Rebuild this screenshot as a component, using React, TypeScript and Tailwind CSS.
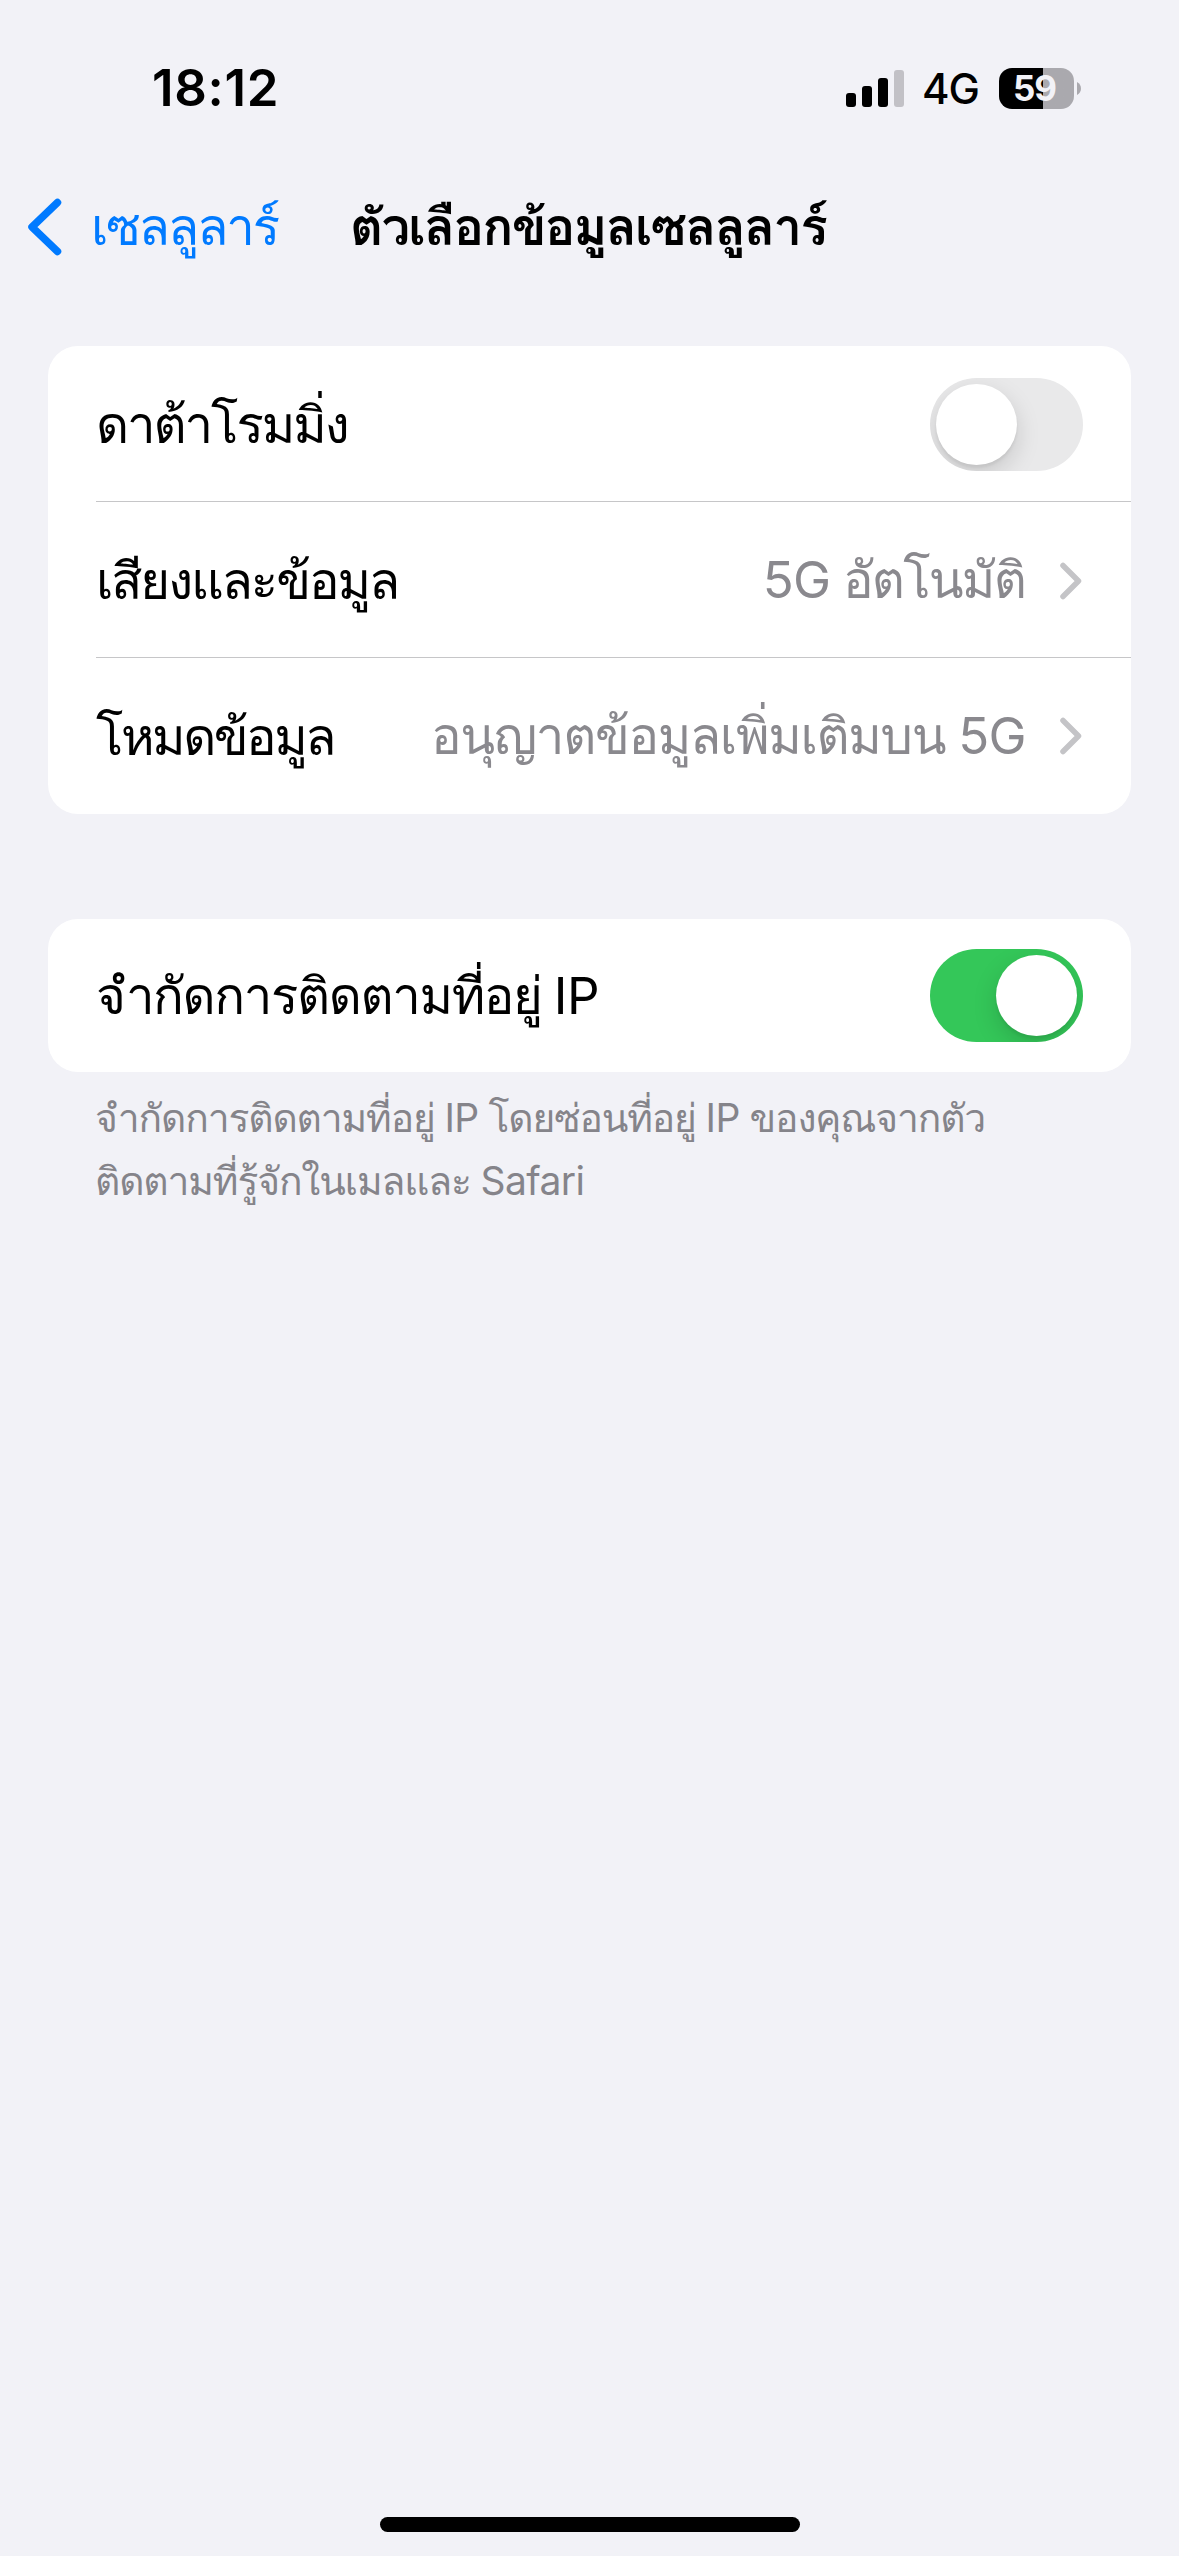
import React from "react";

const Toggle: React.FC<{ on?: boolean }> = ({ on = false }) => (
  <div
    className={`flex h-[93px] w-[153px] shrink-0 items-center overflow-hidden rounded-full px-[6px] ${
      on ? "justify-end bg-[#34c759]" : "justify-start bg-[#e9e9ea]"
    }`}
  >
    <div className="size-[81px] rounded-full bg-white shadow-[0_9px_24px_rgba(0,0,0,0.15),0_3px_3px_rgba(0,0,0,0.06)]" />
  </div>
);

const Chevron = () => (
  <svg className="ml-[35px] mr-px shrink-0" width="22" height="38" viewBox="0 0 22 38" fill="none">
    <path
      d="M3 3.5 18.5 19 3 34.5"
      stroke="#c4c4c7"
      strokeWidth="5.5"
      strokeLinecap="round"
      strokeLinejoin="round"
    />
  </svg>
);

// Latin words keep their own spacing inside the tighter Thai text
const Latin: React.FC<{ children: string }> = ({ children }) => (
  <span className="font-normal tracking-[-0.6px]">{children}</span>
);

type RowProps = {
  label: React.ReactNode;
  labelClass?: string;
  divider?: boolean;
  children: React.ReactNode;
};

const Row: React.FC<RowProps> = ({ label, labelClass = "", divider = false, children }) => (
  <div
    className={`ml-[48px] flex h-[156px] items-center justify-between pr-[48px] ${
      divider ? "border-b border-[#c6c6c8] pt-[2px]" : ""
    }`}
  >
    <span className={`whitespace-nowrap pt-[2px] font-medium text-black ${labelClass}`}>{label}</span>
    <div className="flex items-center">{children}</div>
  </div>
);

const StatusBar = () => (
  <header className="flex h-[160px] items-start justify-between pl-[152px] pr-[98px] pt-[58px]">
    <span className="text-[51px] font-semibold leading-[60px] tracking-[0.7px]">18:12</span>
    <div className="flex h-[60px] items-center">
      <svg width="58" height="37" viewBox="0 0 58 37">
        <rect x="0" y="23" width="10" height="14" rx="3" />
        <rect x="16" y="16" width="10" height="21" rx="3" />
        <rect x="32" y="8" width="10" height="29" rx="3" />
        <rect x="48" y="0" width="10" height="37" rx="3" fill="#c2c1c6" />
      </svg>
      <span className="ml-[18px] pt-[2px] text-[42px] font-medium leading-[60px] tracking-[-1px]">4G</span>
      <div className="ml-[20px] flex items-center gap-[3px]">
        <div className="flex h-[41px] w-[75px] items-center justify-center rounded-[13px] bg-linear-to-r from-black from-[58.7%] to-[#aaa9ae] to-[58.7%] pr-[4px] text-[35px] font-bold leading-none tracking-[-1px] text-[#f2f2f7]">
          59
        </div>
        <svg width="4" height="13" viewBox="0 0 4 13">
          <path d="M0 0C5.3 2.4 5.3 10.6 0 13Z" fill="#aaa9ae" />
        </svg>
      </div>
    </div>
  </header>
);

const App: React.FC = () => {
  return (
    <div className="flex h-[2556px] w-[1179px] flex-col bg-[#f2f2f7] font-['Inter','Thonburi','Loma','Garuda','Waree','Noto_Sans_Thai_Looped','Noto_Sans_Thai','Noto_Sans',sans-serif] text-[51px] text-black">
      <StatusBar />
      <nav className="flex h-[133px] items-center pl-[27px]">
        <svg className="shrink-0" width="35" height="58" viewBox="0 0 35 58" fill="none">
          <path
            d="M30.5 4.5 5 29 30.5 53.5"
            stroke="#007aff"
            strokeWidth="7.5"
            strokeLinecap="round"
            strokeLinejoin="round"
          />
        </svg>
        <span className="ml-[29px] w-[259px] whitespace-nowrap pt-px tracking-[-2.1px] text-[#007aff]">
          เซลลูลาร์
        </span>
        <h1 className="whitespace-nowrap pt-px font-semibold tracking-[-1.7px]">ตัวเลือกข้อมูลเซลลูลาร์</h1>
      </nav>

      <main className="flex-1 px-[48px] pt-[53px]">
        <section className="rounded-[30px] bg-white">
          <Row label="ดาต้าโรมมิ่ง" labelClass="tracking-[-2.1px]" divider>
            <Toggle />
          </Row>
          <Row label="เสียงและข้อมูล" labelClass="tracking-[-2.1px]" divider>
            <span className="whitespace-nowrap tracking-[-1.8px] text-[#8a898e]">
              <Latin>5G</Latin> อัตโนมัติ
            </span>
            <Chevron />
          </Row>
          <Row label="โหมดข้อมูล" labelClass="tracking-[-2.5px]">
            <span className="-mr-px whitespace-nowrap tracking-[-1.35px] text-[#8a898e]">
              อนุญาตข้อมูลเพิ่มเติมบน <Latin>5G</Latin>
            </span>
            <Chevron />
          </Row>
        </section>

        <section className="mt-[105px] flex h-[153px] flex-col justify-center rounded-[30px] bg-white">
          <Row
            label={
              <>
                จำกัดการติดตามที่อยู่ <Latin>IP</Latin>
              </>
            }
            labelClass="tracking-[-1.4px]"
          >
            <Toggle on />
          </Row>
        </section>
        <p className="mt-[14px] pl-[47px] text-[39px] leading-[63px] tracking-[-1.15px] text-[#85848a]">
          <span className="block whitespace-nowrap">
            จำกัดการติดตามที่อยู่ <Latin>IP</Latin> โดยซ่อนที่อยู่ <Latin>IP</Latin> ของคุณจากตัว
          </span>
          <span className="block whitespace-nowrap">
            ติดตามที่รู้จักในเมลและ <Latin>Safari</Latin>
          </span>
        </p>
      </main>

      <footer className="flex justify-center pb-[24px]">
        <div className="h-[15px] w-[420px] rounded-full bg-black" />
      </footer>
    </div>
  );
};

export default App;
